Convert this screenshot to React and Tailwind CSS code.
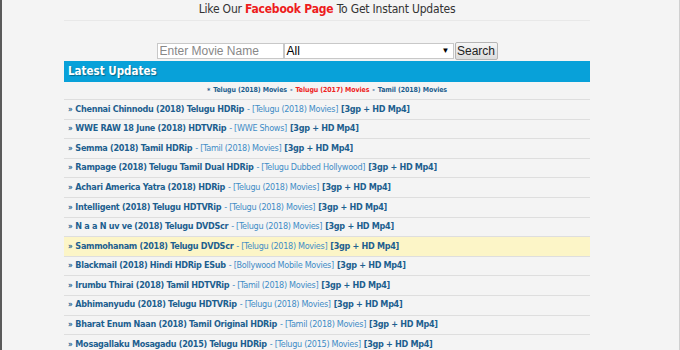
import React from 'react';

const rows = [
  { title: 'Chennai Chinnodu (2018) Telugu HDRip', cat: 'Telugu (2018) Movies' },
  { title: 'WWE RAW 18 June (2018) HDTVRip', cat: 'WWE Shows' },
  { title: 'Semma (2018) Tamil HDRip', cat: 'Tamil (2018) Movies' },
  { title: 'Rampage (2018) Telugu Tamil Dual HDRip', cat: 'Telugu Dubbed Hollywood' },
  { title: 'Achari America Yatra (2018) HDRip', cat: 'Telugu (2018) Movies' },
  { title: 'Intelligent (2018) Telugu HDTVRip', cat: 'Telugu (2018) Movies' },
  { title: 'N a a N uv ve (2018) Telugu DVDScr', cat: 'Telugu (2018) Movies' },
  { title: 'Sammohanam (2018) Telugu DVDScr', cat: 'Telugu (2018) Movies', hot: true },
  { title: 'Blackmail (2018) Hindi HDRip ESub', cat: 'Bollywood Mobile Movies' },
  { title: 'Irumbu Thirai (2018) Tamil HDTVRip', cat: 'Tamil (2018) Movies' },
  { title: 'Abhimanyudu (2018) Telugu HDTVRip', cat: 'Telugu (2018) Movies' },
  { title: 'Bharat Enum Naan (2018) Tamil Original HDRip', cat: 'Tamil (2018) Movies' },
  { title: 'Mosagallaku Mosagadu (2015) Telugu HDRip', cat: 'Telugu (2015) Movies' },
];

const tahoma = {
  fontFamily: '"DejaVu Sans Condensed", "Liberation Sans", Arial, sans-serif',
  fontStretch: 'condensed',
};

function Row({ item }) {
  return (
    <div
      className={`h-[19.6px] flex items-center px-[4px] border-b border-[#dedede] whitespace-nowrap overflow-hidden ${
        item.hot ? 'bg-[#fcf5c7]' : ''
      }`}
    >
      <span className="text-[#1d5f8f] font-bold">
        <span className="text-[8px] mr-[3px]">»</span>
        {item.title}
      </span>
      <span className="text-[#3f8cc6] ml-[3px]">- [{item.cat}]</span>
      <span className="text-[#1d5f8f] font-bold ml-[3px]">[3gp + HD Mp4]</span>
    </div>
  );
}

export default function App() {
  return (
    <div
      className="w-[680px] h-[350px] overflow-hidden bg-[#f4f4f4] border-l-2 border-l-[#5a5a5a] border-r border-r-[#d0d0d0]"
      style={{ fontFamily: '"Liberation Sans", Arial, sans-serif' }}
    >
      <div className="w-[526px] ml-[62px]">
        <div
          className="h-[21px] text-center text-[12px] tracking-[-0.2px] text-[#333] border-b border-[#e8e8e8]"
          style={tahoma}
        >
          Like Our <span className="text-[#ee1c1c] font-bold">Facebook Page</span> To Get Instant Updates
        </div>

        <div className="h-[40px] flex items-end justify-center pb-[1px]">
          <div className="flex items-center">
            <input
              className="w-[127px] h-[16px] bg-white border border-[#c8c8c8] px-[2px] text-[12px] placeholder:text-[#888] outline-none"
              placeholder="Enter Movie Name"
            />
            <div className="w-[170px] h-[16px] bg-white border border-[#c8c8c8] flex items-center justify-between px-[2px] text-[12px] text-black">
              <span>All</span>
              <span className="text-[8px] mr-[1px]">▼</span>
            </div>
            <button className="w-[43px] h-[18px] ml-[1px] border border-[#b5b5b5] rounded-[2px] bg-gradient-to-b from-[#f6f6f6] to-[#dcdcdc] text-[12px] text-[#222] leading-none">
              Search
            </button>
          </div>
        </div>

        <div className="h-[21px] bg-[#08a1d9] flex items-center px-[4px]">
          <span
            className="text-white font-bold text-[11.5px]"
            style={{ ...tahoma, textShadow: '1px 1px 1px rgba(0,0,0,0.35)' }}
          >
            Latest Updates
          </span>
        </div>

        <div
          className="h-[18px] flex items-center justify-center text-[7px] tracking-[-0.1px] font-bold border-b border-[#dedede]"
          style={tahoma}
        >
          <span className="text-[#1d5f8f] mr-[3px] self-start mt-[4px]">*</span>
          <span className="text-[#1d5f8f]">Telugu (2018) Movies</span>
          <span className="text-[#1d5f8f] mx-[3px]">-</span>
          <span className="text-[#ee2222]">Telugu (2017) Movies</span>
          <span className="text-[#1d5f8f] mx-[3px]">-</span>
          <span className="text-[#1d5f8f]">Tamil (2018) Movies</span>
        </div>

        <div className="text-[9px] tracking-[-0.3px]" style={tahoma}>
          {rows.map((r, i) => (
            <Row key={i} item={r} />
          ))}
        </div>
      </div>
    </div>
  );
}
